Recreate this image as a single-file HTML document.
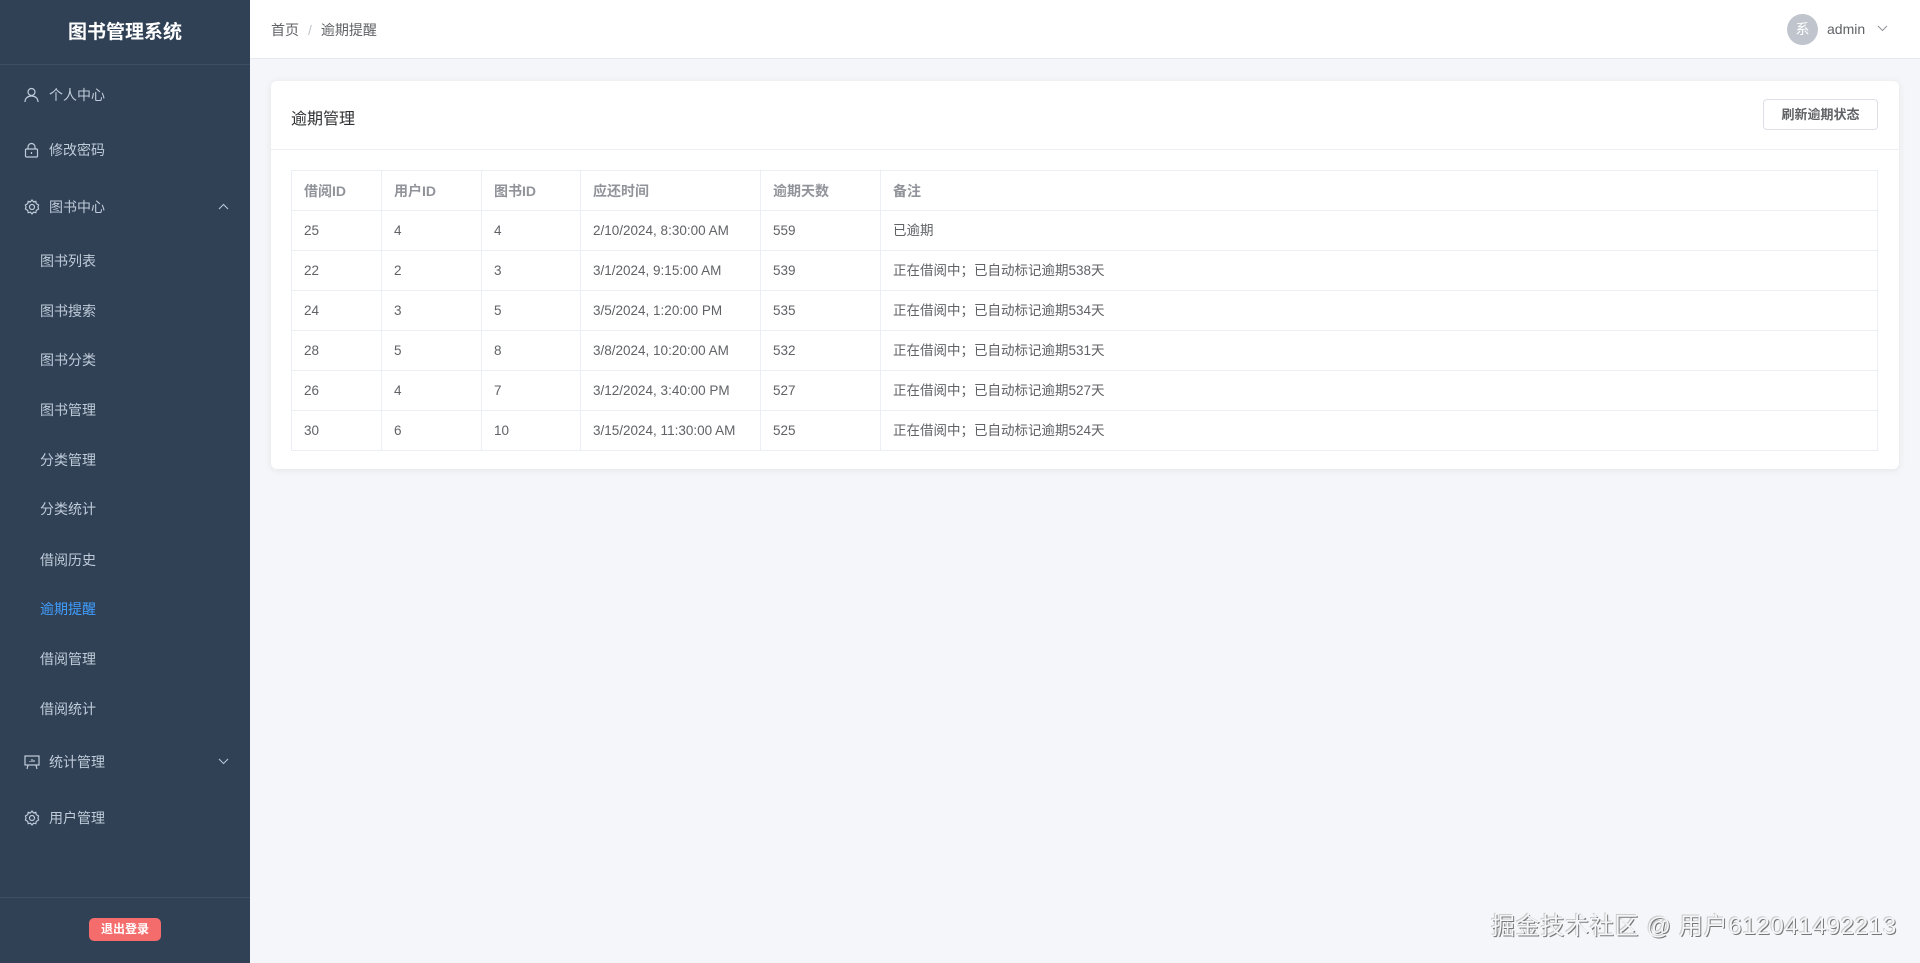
<!DOCTYPE html>
<html><head><meta charset="utf-8"><style>
*{box-sizing:border-box;margin:0;padding:0}
body{width:1920px;height:963px;overflow:hidden;background:#f4f6f9;font-family:"Liberation Sans","Noto Sans CJK SC",sans-serif;position:relative}
.side{position:absolute;left:0;top:0;width:250px;height:963px;background:#304156;color:#bfcbd9}
.logo{height:65px;border-bottom:1px solid #3d4e63;color:#fff;font-weight:bold;font-size:19px;text-align:center;line-height:66px}
.mi{position:absolute;left:0;width:250px;font-size:14px;line-height:20px}
.mi svg.ic{position:absolute;left:24px;top:2px}
.mi span{position:absolute;left:49px}
.sub{position:absolute;left:40px;font-size:14px;line-height:20px}
.arr{position:absolute;left:218px;top:6px}
.div{position:absolute;left:0;top:897px;width:250px;border-top:1px solid #3d4e63}
.logout{position:absolute;left:89px;top:918px;width:72px;height:23px;background:#f56c6c;color:#fff;border-radius:5px;font-size:12px;font-weight:bold;text-align:center;line-height:23px}
.top{position:absolute;left:250px;top:0;right:0;height:59px;background:#fff;border-bottom:1px solid #e4e7ed}
.bc{position:absolute;left:21px;top:20px;font-size:14px;color:#606266}
.bc i{font-style:normal;color:#c0c4cc;margin:0 9px}
.av{position:absolute;left:1537px;top:14px;width:31px;height:31px;border-radius:50%;background:#c0c4cc;color:#fff;font-size:14px;text-align:center;line-height:31px}
.adm{position:absolute;left:1577px;top:21px;font-size:14px;color:#606266}
.card{position:absolute;left:271px;top:81px;width:1628px;height:388px;background:#fff;border-radius:6px;box-shadow:0 1px 8px rgba(0,0,0,.08)}
.ct{position:absolute;left:20px;top:24px;font-size:16px;color:#303133}
.hd{position:absolute;left:0;top:68px;width:100%;border-top:1px solid #ebeef5}
.btn{position:absolute;left:1492px;top:18px;width:115px;height:31px;border:1px solid #dcdfe6;border-radius:4px;font-size:13px;color:#606266;text-align:center;line-height:29px;font-weight:bold}
table{position:absolute;left:20px;top:89px;width:1587px;border-collapse:collapse;font-size:13.5px;color:#606266}
td,th{border:1px solid #ebeef5;height:40px;padding:0 12px;text-align:left;white-space:nowrap;line-height:16px;vertical-align:middle}
th{color:#909399;font-weight:bold;font-size:14px}
.wm{position:absolute;left:1491px;top:906px;font-size:24px;color:#f4f6f9;text-shadow:1px 1px 0 #777,-1px -1px 0 #ccc;letter-spacing:0.7px}
</style></head><body>
<div class="side">
<div class="logo">图书管理系统</div>
<div class="mi" style="top:85px"><svg class="ic" width="15" height="16" viewBox="0 0 15 16" fill="none" stroke="#bfcbd9" stroke-width="1.2"><circle cx="7.5" cy="5" r="3.5"/><path d="M1 15c0-4 3-6 6.5-6s6.5 2 6.5 6"/></svg><span>个人中心</span></div>
<div class="mi" style="top:140px"><svg class="ic" width="15" height="16" viewBox="0 0 15 16" fill="none" stroke="#bfcbd9" stroke-width="1.2"><rect x="1.5" y="7" width="12" height="8" rx="1"/><path d="M4 7V5a3.5 3.5 0 0 1 7 0v2M7.5 10v2"/></svg><span>修改密码</span></div>
<div class="mi" style="top:197px"><svg class="ic" width="16" height="16" viewBox="0 0 16 16" fill="none" stroke="#bfcbd9" stroke-width="1.2"><circle cx="8" cy="8" r="2.5"/><path d="M8 1l1.5 1.8 2.3-.5.5 2.3L14.6 6 14 8l.6 2-2.3 1.4-.5 2.3-2.3-.5L8 15l-1.5-1.8-2.3.5-.5-2.3L1.4 10 2 8l-.6-2 2.3-1.4.5-2.3 2.3.5z"/></svg><span>图书中心</span><svg class="arr" width="11" height="7" viewBox="0 0 11 7" fill="none" stroke="#bfcbd9"><path d="M1 6l4.5-4.5L10 6"/></svg></div>
<div class="sub" style="top:251px">图书列表</div>
<div class="sub" style="top:301px">图书搜索</div>
<div class="sub" style="top:350px">图书分类</div>
<div class="sub" style="top:400px">图书管理</div>
<div class="sub" style="top:450px">分类管理</div>
<div class="sub" style="top:499px">分类统计</div>
<div class="sub" style="top:550px">借阅历史</div>
<div class="sub" style="top:599px;color:#409eff">逾期提醒</div>
<div class="sub" style="top:649px">借阅管理</div>
<div class="sub" style="top:699px">借阅统计</div>
<div class="mi" style="top:752px"><svg class="ic" width="16" height="16" viewBox="0 0 16 16" fill="none" stroke="#bfcbd9" stroke-width="1.2"><rect x="1" y="2" width="14" height="9"/><path d="M4 11l-1 4M12 11l1 4M6 8V7M8 8V5M10 8V6"/></svg><span>统计管理</span><svg class="arr" width="11" height="7" viewBox="0 0 11 7" fill="none" stroke="#bfcbd9"><path d="M1 1l4.5 4.5L10 1"/></svg></div>
<div class="mi" style="top:808px"><svg class="ic" width="16" height="16" viewBox="0 0 16 16" fill="none" stroke="#bfcbd9" stroke-width="1.2"><circle cx="8" cy="8" r="2.5"/><path d="M8 1l1.5 1.8 2.3-.5.5 2.3L14.6 6 14 8l.6 2-2.3 1.4-.5 2.3-2.3-.5L8 15l-1.5-1.8-2.3.5-.5-2.3L1.4 10 2 8l-.6-2 2.3-1.4.5-2.3 2.3.5z"/></svg><span>用户管理</span></div>
<div class="div"></div>
<div class="logout">退出登录</div>
</div>
<div class="top">
<div class="bc">首页<i>/</i>逾期提醒</div>
<div class="av">系</div>
<div class="adm">admin <svg style="margin-left:8px;vertical-align:2px" width="11" height="7" viewBox="0 0 11 7" fill="none" stroke="#909399"><path d="M1 1l4.5 4.5L10 1"/></svg></div>
</div>
<div class="card">
<div class="ct">逾期管理</div>
<div class="btn">刷新逾期状态</div>
<div class="hd"></div>
<table>
<colgroup><col style="width:90px"><col style="width:100px"><col style="width:99px"><col style="width:180px"><col style="width:120px"><col></colgroup>
<tr><th>借阅ID</th><th>用户ID</th><th>图书ID</th><th>应还时间</th><th>逾期天数</th><th>备注</th></tr>
<tr><td>25</td><td>4</td><td>4</td><td>2/10/2024, 8:30:00 AM</td><td>559</td><td>已逾期</td></tr>
<tr><td>22</td><td>2</td><td>3</td><td>3/1/2024, 9:15:00 AM</td><td>539</td><td>正在借阅中；已自动标记逾期538天</td></tr>
<tr><td>24</td><td>3</td><td>5</td><td>3/5/2024, 1:20:00 PM</td><td>535</td><td>正在借阅中；已自动标记逾期534天</td></tr>
<tr><td>28</td><td>5</td><td>8</td><td>3/8/2024, 10:20:00 AM</td><td>532</td><td>正在借阅中；已自动标记逾期531天</td></tr>
<tr><td>26</td><td>4</td><td>7</td><td>3/12/2024, 3:40:00 PM</td><td>527</td><td>正在借阅中；已自动标记逾期527天</td></tr>
<tr><td>30</td><td>6</td><td>10</td><td>3/15/2024, 11:30:00 AM</td><td>525</td><td>正在借阅中；已自动标记逾期524天</td></tr>
</table>
</div>
<div class="wm">掘金技术社区 @ 用户612041492213</div>
</body></html>
